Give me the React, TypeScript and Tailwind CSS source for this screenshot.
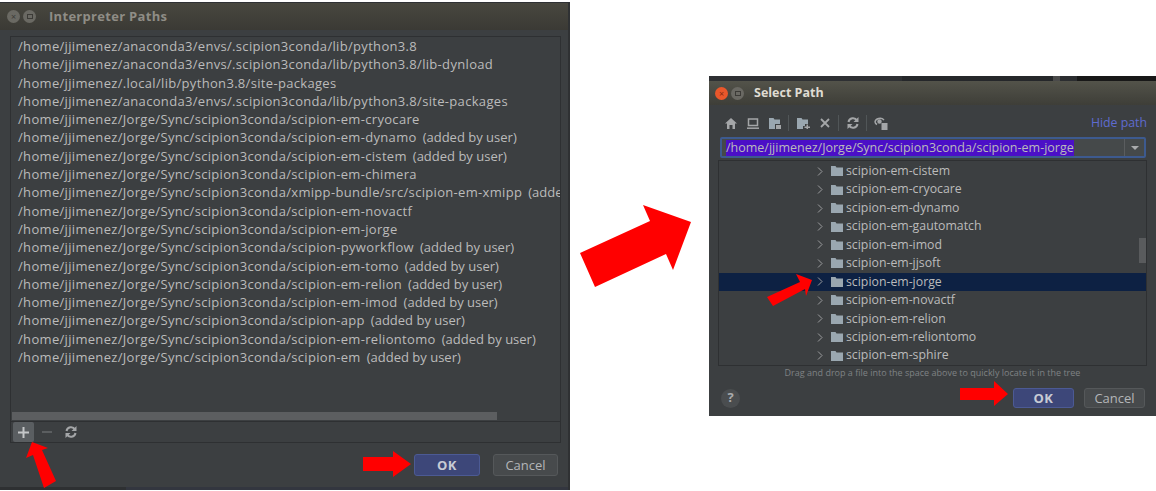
const FONT = "font-['Open_Sans',sans-serif]"

const paths = [
  { path: '/home/jjimenez/anaconda3/envs/.scipion3conda/lib/python3.8' },
  { path: '/home/jjimenez/anaconda3/envs/.scipion3conda/lib/python3.8/lib-dynload' },
  { path: '/home/jjimenez/.local/lib/python3.8/site-packages' },
  { path: '/home/jjimenez/anaconda3/envs/.scipion3conda/lib/python3.8/site-packages' },
  { path: '/home/jjimenez/Jorge/Sync/scipion3conda/scipion-em-cryocare' },
  { path: '/home/jjimenez/Jorge/Sync/scipion3conda/scipion-em-dynamo', user: true },
  { path: '/home/jjimenez/Jorge/Sync/scipion3conda/scipion-em-cistem', user: true },
  { path: '/home/jjimenez/Jorge/Sync/scipion3conda/scipion-em-chimera' },
  { path: '/home/jjimenez/Jorge/Sync/scipion3conda/xmipp-bundle/src/scipion-em-xmipp', user: true },
  { path: '/home/jjimenez/Jorge/Sync/scipion3conda/scipion-em-novactf' },
  { path: '/home/jjimenez/Jorge/Sync/scipion3conda/scipion-em-jorge' },
  { path: '/home/jjimenez/Jorge/Sync/scipion3conda/scipion-pyworkflow', user: true },
  { path: '/home/jjimenez/Jorge/Sync/scipion3conda/scipion-em-tomo', user: true },
  { path: '/home/jjimenez/Jorge/Sync/scipion3conda/scipion-em-relion', user: true },
  { path: '/home/jjimenez/Jorge/Sync/scipion3conda/scipion-em-imod', user: true },
  { path: '/home/jjimenez/Jorge/Sync/scipion3conda/scipion-app', user: true },
  { path: '/home/jjimenez/Jorge/Sync/scipion3conda/scipion-em-reliontomo', user: true },
  { path: '/home/jjimenez/Jorge/Sync/scipion3conda/scipion-em', user: true },
]

const folders = [
  'scipion-em-cistem',
  'scipion-em-cryocare',
  'scipion-em-dynamo',
  'scipion-em-gautomatch',
  'scipion-em-imod',
  'scipion-em-jjsoft',
  'scipion-em-jorge',
  'scipion-em-novactf',
  'scipion-em-relion',
  'scipion-em-reliontomo',
  'scipion-em-sphire',
]

function Refresh() {
  return (
    <svg width="14" height="14" viewBox="0 0 14 14" fill="none" stroke="#a4a6a8" strokeWidth="2">
      <path d="M2.500 6A4.600 4.600 0 0 1 11 4.500M11.500 8A4.600 4.600 0 0 1 3 9.500" />
      <path d="M12.500 1v5H7.500zM1.500 13V8h5z" strokeWidth="0" fill="#a4a6a8" />
    </svg>
  )
}

function Folder({ color = '#9aa7b0' }: { color?: string }) {
  return (
    <svg width="12" height="10" viewBox="0 0 12 10" fill={color}>
      <path d="M0 0h4.500l1 1.500H12V10H0z" />
    </svg>
  )
}

function TitleBar({ title, active }: { title: string; active?: boolean }) {
  return (
    <div
      className={`shrink-0 flex items-center bg-gradient-to-b ${
        active
          ? 'h-[24px] pl-[6px] from-[#53534a] to-[#3e3e38]'
          : 'h-[28px] pl-[7px] from-[#48473f] to-[#3b3a35] border-t border-[#2f3134]'
      }`}
    >
      <span
        className={`w-[13px] h-[13px] rounded-full flex items-center justify-center text-[9px] leading-none ${
          active ? 'bg-[#e9572b] text-[#8a2a10]' : 'bg-[#6a6963] text-[#3c3b37]'
        }`}
      >
        ×
      </span>
      <span className="w-[13px] h-[13px] rounded-full bg-[#6a6963] ml-[3px] flex items-center justify-center">
        <span className="w-[6px] h-[5px] border border-[#3c3b37]" />
      </span>
      {active ? (
        <span className="ml-[10px] pt-[1px] text-[12.500px] font-bold text-[#dfdbd2]">{title}</span>
      ) : (
        <span className="ml-[13px] pt-[1px] text-[13px] font-bold tracking-[0.3px] text-[#8f8d86]">{title}</span>
      )}
    </div>
  )
}

function DialogButton({ label, primary, size }: { label: string; primary?: boolean; size: string }) {
  return (
    <button
      className={`${size} rounded-[3px] border text-[13px] leading-none flex items-center justify-center ${
        primary
          ? 'bg-[#3d4779] border-[#4c5a94] text-[#c8cbd4] font-bold tracking-[0.5px]'
          : 'bg-[#474a4c] border-[#55585a] text-[#b4b6b8]'
      }`}
    >
      {label}
    </button>
  )
}

function InterpreterPaths() {
  return (
    <div className="absolute left-0 top-[2px] w-[570px] h-[488px] flex flex-col bg-[#3c3f41] border-r-2 border-[#2f3133] overflow-hidden">
      <TitleBar title="Interpreter Paths" />
      <div className="mt-[6px] ml-[10px] mr-[7px] h-[407px] shrink-0 border border-[#2e3032] flex flex-col">
        <div className="flex-1 pl-[7px] overflow-hidden">
          {paths.map((p) => (
            <div
              key={p.path}
              className="h-[18.300px] leading-[18.300px] text-[13px] tracking-[0.32px] text-[#bbbbbb] whitespace-nowrap"
            >
              {p.path}
              {p.user && <span className="ml-[6px] tracking-normal">(added by user)</span>}
            </div>
          ))}
        </div>
        <div className="h-[8px] shrink-0 flex items-stretch">
          <div className="w-[485px] ml-[1px] bg-[#5c5e60]" />
        </div>
        <div className="h-[21px] shrink-0 mt-[1px] border-t border-[#2e3032] flex items-center pl-[2px]">
          <div className="w-[21px] h-[20px] rounded-[2px] bg-[#5a5e61] flex items-center justify-center">
            <svg width="11" height="11" viewBox="0 0 11 11" fill="#c4c6c8">
              <path d="M4.500 0h2v4.500H11v2H6.500V11h-2V6.500H0v-2h4.500z" />
            </svg>
          </div>
          <div className="h-[1.500px] bg-[#5b5e60] ml-[8px] w-[10px]" />
          <div className="ml-[12px] flex">
            <Refresh />
          </div>
        </div>
      </div>
      <div className="flex justify-end gap-[13px] mt-[11px] pr-[10px]">
        <DialogButton label="OK" primary size="w-[66px] h-[22px]" />
        <DialogButton label="Cancel" size="w-[65px] h-[22px]" />
      </div>
      <div className="mt-auto h-[3px] shrink-0 flex">
        <div className="w-[126px] bg-[#2e3032]" />
        <div className="flex-1 bg-[#33363f]" />
      </div>
    </div>
  )
}

function PathToolbar() {
  return (
    <div className="h-[32px] shrink-0 flex items-center pt-[4px] pl-[16px] pr-[9px]">
      <svg width="12" height="11" viewBox="0 0 12 11" fill="#a4a6a8">
        <path d="M6 0l6 5.500h-2V11H7.500V7h-3v4H2V5.500H0z" />
      </svg>
      <svg className="ml-[10px]" width="12" height="11" viewBox="0 0 12 11" fill="none" stroke="#a4a6a8">
        <path d="M1.500 1h9v6.500h-9z" strokeWidth="1.500" />
        <path d="M0 10.200h12" strokeWidth="1.500" />
      </svg>
      <svg className="ml-[10px]" width="12" height="11" viewBox="0 0 12 11" fill="#9aa7b0">
        <path d="M0 0h4.500l1 1.500H11V6H6v5H0z" />
        <path d="M7 7h5v4H7z" fill="#a4a6a8" />
      </svg>
      <div className="w-px h-[16px] bg-[#515658] ml-[7px]" />
      <svg className="ml-[8px]" width="13" height="11" viewBox="0 0 13 11" fill="#9aa7b0">
        <path d="M0 0h4.500l1 1.500H11V6H8v2H6v3H0z" />
        <path d="M9.500 6.500h1.500v2h2V10h-2v1H9.500v-1H7.500V8.500h2z" fill="#a4a6a8" />
      </svg>
      <svg className="ml-[10px]" width="10" height="10" viewBox="0 0 10 10" stroke="#a4a6a8" strokeWidth="1.800">
        <path d="M1 1l8 8M9 1l-8 8" />
      </svg>
      <div className="w-px h-[16px] bg-[#515658] ml-[8px]" />
      <div className="ml-[7px] flex">
        <Refresh />
      </div>
      <div className="w-px h-[16px] bg-[#515658] ml-[6px]" />
      <svg className="ml-[7px]" width="14" height="14" viewBox="0 0 14 14" fill="none" stroke="#a4a6a8" strokeWidth="1.500">
        <path d="M1 6a5 4 0 0 1 9-2M3 8.500A5 4 0 0 1 1 6" />
        <circle cx="5.500" cy="5.500" r="1.500" fill="#a4a6a8" />
        <path d="M7.500 7h6v7h-6z" fill="#a4a6a8" stroke="none" />
      </svg>
      <span className="ml-auto text-[12.300px] text-[#5f6bd0]">Hide path</span>
    </div>
  )
}

function SelectPath() {
  return (
    <div className="absolute left-[709px] top-[76px] w-[447px] h-[340px] flex flex-col bg-[#3c3f41] overflow-hidden">
      {/* bit of the desktop behind the dialog */}
      <div className="h-[5px] shrink-0 flex">
        <div className="w-[193px] bg-[#2e3033]" />
        <div className="w-[151px] bg-[#25272a]" />
        <div className="w-[7px] bg-[#4a4a4a]" />
        <div className="w-[17px] bg-[#2b2d30]" />
        <div className="flex-1 bg-[#181818]" />
      </div>
      <TitleBar title="Select Path" active />
      <PathToolbar />
      <div className="h-[21px] shrink-0 ml-[11px] mr-[10px] rounded-[2px] border-2 border-[#3d5a8f] flex items-center bg-[#45494a]">
        <span className="ml-[4px] h-[16px] leading-[16px] bg-[#4b0fc7] text-[12.500px] text-[#bbbbbb] whitespace-nowrap">
          /home/jjimenez/Jorge/Sync/scipion3conda/scipion-em-jorge
        </span>
        <span className="ml-auto w-[20px] h-full border-l border-[#5a5d5f] flex items-center justify-center">
          <span className="w-0 h-0 border-x-[4px] border-x-transparent border-t-[4px] border-t-[#a9abad]" />
        </span>
      </div>
      <div className="relative mt-[2px] mx-[9px] h-[206px] shrink-0 border border-[#2e3032] pt-[1px] overflow-hidden">
        {folders.map((name) => (
          <div
            key={name}
            className={`h-[18.450px] flex items-center text-[12.300px] text-[#bbbbbb] pl-[98px] ${
              name === 'scipion-em-jorge' ? 'bg-[#0d2143]' : ''
            }`}
          >
            <svg width="6" height="9" viewBox="0 0 6 9" fill="none" stroke="#9b9d9f" strokeWidth="1">
              <path d="M1 .5l4 4-4 4" />
            </svg>
            <span className="ml-[8px] flex">
              <Folder />
            </span>
            <span className="ml-[3px]">{name}</span>
          </div>
        ))}
        <div className="absolute right-0 top-[77px] w-[7px] h-[25px] bg-[#595b5d]" />
      </div>
      <p className="shrink-0 h-[14px] text-center text-[9px] leading-[14px] text-[#7f8284]">
        Drag and drop a file into the space above to quickly locate it in the tree
      </p>
      <div className="flex items-center mt-[8px] pl-[12px] pr-[11px]">
        <span className="w-[19px] h-[19px] rounded-full bg-[#4a4d4f] text-[13px] font-bold text-[#a9abad] flex items-center justify-center">
          ?
        </span>
        <div className="ml-auto flex gap-[10px]">
          <DialogButton label="OK" primary size="w-[61px] h-[20px]" />
          <DialogButton label="Cancel" size="w-[61px] h-[20px]" />
        </div>
      </div>
    </div>
  )
}

export default function App() {
  return (
    <div className={`relative w-[1156px] h-[491px] bg-white overflow-hidden ${FONT}`}>
      <InterpreterPaths />
      <SelectPath />
      {/* red annotation arrows */}
      <svg className="absolute inset-0 pointer-events-none" width="1156" height="491" fill="#ff0000">
        <polygon points="580,253 650,221 643,205 691,222 673,270 666,254 595,287" />
        <polygon points="363,457 393,457 393,451 411,464 393,477 393,471 363,471" />
        <polygon points="32,442 48,448 42,450 56,481 44,488 33,455 26,458" />
        <polygon points="796,274 812,280 806,296 805,289 773,306 767,297 800,282" />
        <polygon points="960,388 994,388 994,381 1008,394 994,406 994,400 960,400" />
      </svg>
    </div>
  )
}
